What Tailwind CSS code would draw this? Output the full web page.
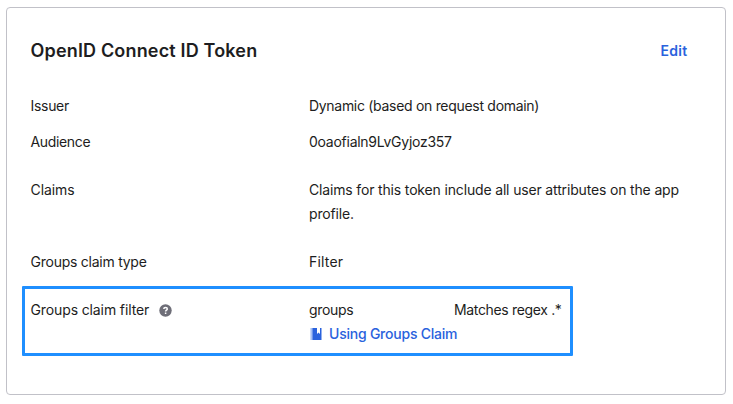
<!DOCTYPE html>
<html lang="en">
<head>
<meta charset="utf-8">
<title>OpenID Connect ID Token</title>
<script src="https://cdn.jsdelivr.net/npm/@tailwindcss/browser@4"></script>
</head>
<body class="bg-white pl-[6px] pt-[7px] font-['Inter',sans-serif] text-[14px] leading-6 text-[#1d1d21]">
<main class="h-[388px] w-[720px] rounded-[4px] border border-[#c1c1c8] pl-[23.5px] pr-[37.5px]">
  <header class="flex items-center justify-between pt-[31px]">
    <h1 class="text-[18px] font-semibold leading-6 tracking-[0.17px]">OpenID Connect ID Token</h1>
    <a href="#" class="font-semibold tracking-[0.3px] text-[#2a62dd]">Edit</a>
  </header>
  <dl class="pt-[31px]">
    <div class="flex h-9"><dt class="w-[278.5px] shrink-0 tracking-[-0.3px]">Issuer</dt><dd class="whitespace-nowrap tracking-[-0.3px]">Dynamic (based on request domain)</dd></div>
    <div class="flex h-12"><dt class="w-[278.5px] shrink-0 tracking-[-0.35px]">Audience</dt><dd class="tracking-[-0.26px]">0oaofialn9LvGyjoz357</dd></div>
    <div class="flex h-[72px]"><dt class="w-[278.5px] shrink-0 tracking-[-0.1px]">Claims</dt><dd class="whitespace-nowrap tracking-[-0.16px]">Claims for this token include all user attributes on the app<br>profile.</dd></div>
    <div class="flex h-9"><dt class="w-[278.5px] shrink-0 tracking-[-0.25px]">Groups claim type</dt><dd class="tracking-[0.2px]">Filter</dd></div>
    <div class="-ml-[8.5px] flex h-[70px] w-[551px] rounded-[1px] border-[3px] border-[#1f8fff] pl-[5.5px] pt-[9px]">
      <dt class="flex h-6 w-[278.5px] shrink-0 items-center"><span class="w-[128.5px] whitespace-nowrap tracking-[-0.12px]">Groups claim filter</span>
        <svg class="size-[13px]" viewBox="0 0 13 13" fill="none"><circle cx="6.5" cy="6.5" r="6.2" fill="#6e6e78"/><path d="M4.8 5.1C4.8 2.9 8.3 3 8.3 5c0 1.2-1.7 1.2-1.7 2.5M6.6 8.6v1.3" stroke="#fff" stroke-width="1.5"/></svg>
      </dt>
      <dd>
        <div class="flex whitespace-nowrap"><span class="w-[145px] tracking-[-0.3px]">groups</span><span class="tracking-[-0.34px]">Matches regex .*</span></div>
        <a href="#" class="flex items-center text-[#2a62dd]">
          <svg class="ml-[1px] mr-[7px] h-[12px] w-[12px]" viewBox="0 0 12 12"><path d="M.4 0H2v12H.4z" fill="#a7c0f4"/><path d="M2 0h1v12H2z" fill="#6f95e9"/><path d="M3 0h4v6l1.5-1.4L10 6V0h1.5v12H3z" fill="#2a62dd"/></svg>
          <span class="whitespace-nowrap font-medium tracking-[-0.23px]">Using Groups Claim</span>
        </a>
      </dd>
    </div>
  </dl>
</main>
</body>
</html>
